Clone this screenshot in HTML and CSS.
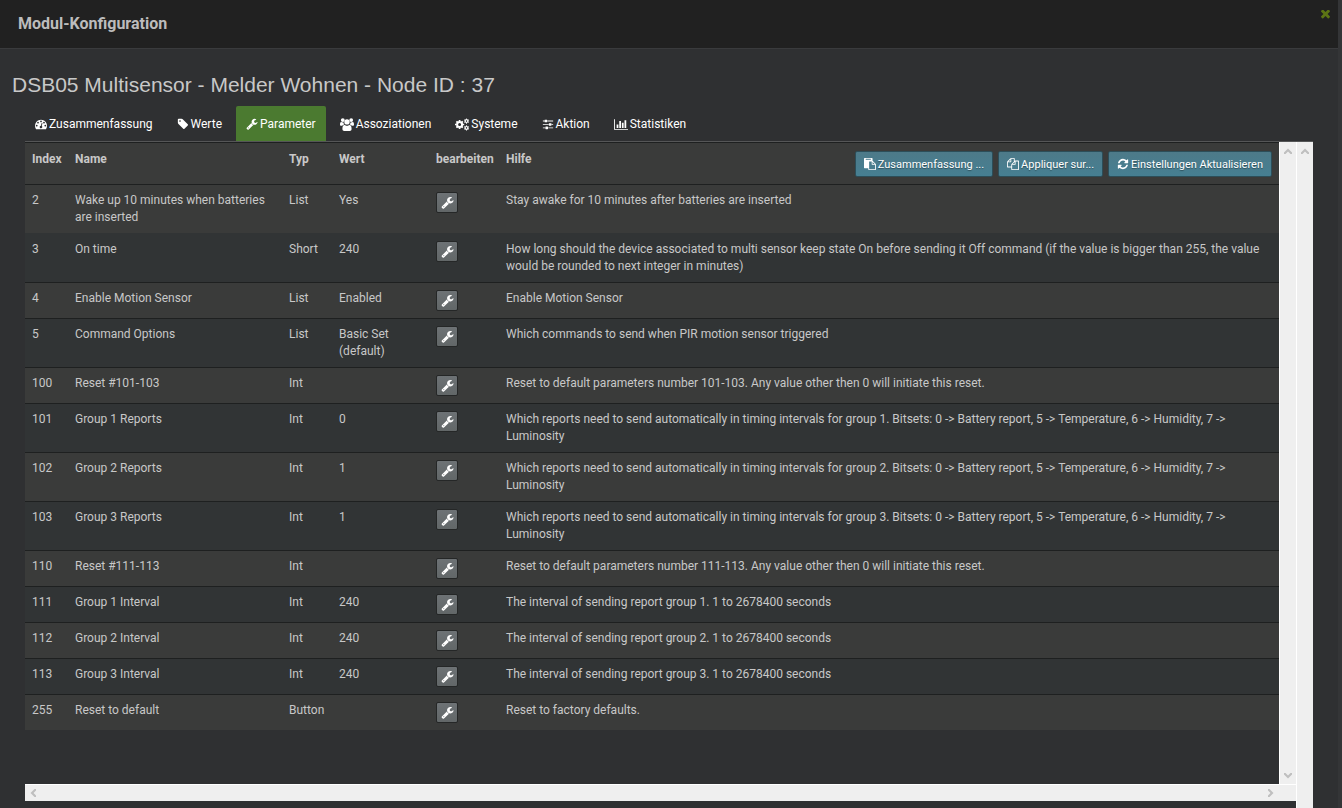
FILE: index.html
```html
<!DOCTYPE html>
<html lang="de">
<head>
<meta charset="utf-8">
<title>Modul-Konfiguration</title>
<link rel="stylesheet" href="styles.css">
</head>
<body>
<svg class="sprite" aria-hidden="true">
  <symbol id="wrench" viewBox="0 0 1792 1792"><path d="M448 1472q0-26-19-45t-45-19-45 19-19 45 19 45 45 19 45-19 19-45zm644-420l-682 682q-37 37-90 37-52 0-91-37l-106-108q-38-36-38-90 0-53 38-91l681-681q39 98 114.500 173.500t173.500 114.500zm634-435q0 39-23 106-47 134-164.500 217.500t-258.500 83.500q-185 0-316.500-131.500t-131.500-316.500 131.500-316.500 316.500-131.500q58 0 121.500 16.500t107.500 46.500q16 11 16 28t-16 28l-293 169v224l193 107q5-3 79-48.500t135.500-81 70.500-35.500q15 0 23.500 10t8.500 25z"/></symbol>
  <symbol id="gauge" viewBox="0 0 1792 1792"><path d="M384 1152q0-53-37.500-90.500t-90.500-37.500-90.500 37.500-37.500 90.500 37.500 90.500 90.500 37.500 90.500-37.500 37.500-90.500zm192-448q0-53-37.500-90.500t-90.500-37.500-90.500 37.500-37.500 90.500 37.500 90.500 90.500 37.500 90.500-37.500 37.500-90.500zm428 481l101-382q6-26-7.500-48.500t-38.500-29.500-48 6.500-30 39.500l-101 382q-60 5-107 43.500t-63 98.500q-20 77 20 146t117 89 146-20 89-117q16-60-6-117t-72-91zm660-33q0-53-37.500-90.500t-90.500-37.500-90.500 37.500-37.500 90.500 37.500 90.500 90.500 37.500 90.500-37.500 37.500-90.500zm-640-640q0-53-37.500-90.500t-90.500-37.500-90.500 37.500-37.500 90.500 37.500 90.500 90.500 37.500 90.500-37.500 37.500-90.500zm448 192q0-53-37.500-90.500t-90.500-37.500-90.500 37.500-37.500 90.500 37.500 90.500 90.500 37.500 90.500-37.500 37.500-90.500zm320 448q0 261-141 483-19 29-54 29h-1402q-35 0-54-29-141-221-141-483 0-182 71-348t191-286 286-191 348-71 348 71 286 191 191 286 71 348z"/></symbol>
  <symbol id="tag" viewBox="0 0 1792 1792"><path d="M576 448q0-53-37.500-90.500t-90.500-37.500-90.500 37.500-37.500 90.500 37.500 90.500 90.500 37.500 90.500-37.500 37.500-90.500zm1067 576q0 53-37 90l-491 492q-39 37-91 37-53 0-90-37l-715-716q-38-37-64.500-101t-26.500-117v-416q0-52 38-90t90-38h416q53 0 117 26.500t102 64.500l715 714q37 39 37 91z"/></symbol>
  <symbol id="users" viewBox="0 0 14 13"><circle cx="2.800" cy="2.100" r="1.900"/><circle cx="11.200" cy="2.100" r="1.900"/><circle cx="7" cy="3.900" r="2.700"/><path d="M0 6.800c0-1.800.3-2.900 1.200-2.900.6 0 1.400.8 2.300.5.100 1 .3 1.700.8 2.300-1.100 0-1.700.5-2.200 1.100H1.300C.5 7.800 0 7.400 0 6.800zM14 6.800c0-1.800-.3-2.900-1.200-2.900-.6 0-1.400.8-2.300.5-.1 1-.3 1.700-.8 2.300 1.100 0 1.700.5 2.200 1.100h.8c.8 0 1.300-.4 1.300-1zM2.400 11c0-2.600.7-4 2.200-4 .6 0 1.100.8 2.400.8S8.800 7 9.400 7c1.500 0 2.200 1.400 2.200 4 0 1.300-.7 2-1.900 2H4.300c-1.200 0-1.900-.7-1.900-2z"/></symbol>
  <symbol id="cogs" viewBox="0 0 14 13"><g fill="none" stroke="currentColor"><circle cx="4.600" cy="6.500" r="2.500" stroke-width="2"/><path d="M4.600 1.900v1.600M4.600 9.500v1.600M0 6.500h1.600M7.600 6.500h1.600M1.400 3.300l1.100 1.100M6.700 8.600l1.100 1.100M1.400 9.700l1.100-1.100M6.700 4.400l1.100-1.100" stroke-width="1.700"/><circle cx="11.500" cy="3.100" r="1.400" stroke-width="1.200"/><circle cx="11.500" cy="9.900" r="1.400" stroke-width="1.200"/><path d="M11.500.6v1M11.500 4.700v1M9.200 1.900l1 .5M12.900 3.800l1 .5M9.200 4.300l1-.5M12.900 2.400l1-.5M11.500 7.400v1M11.500 11.500v1M9.200 8.700l1 .5M12.900 10.600l1 .5M9.200 11.100l1-.5M12.900 9.200l1-.5"/></g></symbol>
  <symbol id="sliders" viewBox="0 0 1792 1792"><path d="M480 1408v128h-352v-128h352zm352-128q26 0 45 19t19 45v256q0 26-19 45t-45 19h-256q-26 0-45-19t-19-45v-256q0-26 19-45t45-19h256zm160-384v128h-864v-128h864zm-640-512v128h-224v-128h224zm1312 1024v128h-736v-128h736zm-960-1152q26 0 45 19t19 45v256q0 26-19 45t-45 19h-256q-26 0-45-19t-19-45v-256q0-26 19-45t45-19h256zm640 512q26 0 45 19t19 45v256q0 26-19 45t-45 19h-256q-26 0-45-19t-19-45v-256q0-26 19-45t45-19h256zm320 128v128h-224v-128h224zm0-512v128h-864v-128h864z"/></symbol>
  <symbol id="chart" viewBox="0 0 2048 1792"><path d="M640 896v512h-256v-512h256zm384-512v1024h-256v-1024h256zm1024 1152v128h-2048v-1536h128v1408h1920zm-640-896v768h-256v-768h256zm384-384v1152h-256v-1152h256z"/></symbol>
  <symbol id="paste" viewBox="0 0 1792 1792"><path d="M768 1664h896v-640h-416q-40 0-68-28t-28-68v-416h-384v1152zm256-1440v-64q0-13-9.500-22.500t-22.500-9.500h-704q-13 0-22.500 9.500t-9.500 22.500v64q0 13 9.500 22.500t22.500 9.500h704q13 0 22.500-9.500t9.500-22.500zm256 672h299l-299-299v299zm512 128v672q0 40-28 68t-68 28h-960q-40 0-68-28t-28-68v-160h-544q-40 0-68-28t-28-68v-1344q0-40 28-68t68-28h1088q40 0 68 28t28 68v328q21 13 36 28l408 408q28 28 48 76t20 88z"/></symbol>
  <symbol id="copy" viewBox="0 0 1792 1792"><path d="M1696 384q40 0 68 28t28 68v1216q0 40-28 68t-68 28h-960q-40 0-68-28t-28-68v-288h-544q-40 0-68-28t-28-68v-672q0-40 20-88t48-76l408-408q28-28 76-48t88-20h416q40 0 68 28t28 68v328q68-40 128-40h416zm-544 213l-299 299h299v-299zm-640-384l-299 299h299v-299zm196 647l316-316v-416h-384v416q0 40-28 68t-68 28h-416v640h512v-256q0-40 20-88t48-76zm956 804v-1152h-384v416q0 40-28 68t-68 28h-416v640h896z"/></symbol>
  <symbol id="refresh" viewBox="0 0 1792 1792"><path d="M1639 1056q0 5-1 7-64 268-268 434.500t-478 166.500q-146 0-282.500-55t-243.500-157l-129 129q-19 19-45 19t-45-19-19-45v-448q0-26 19-45t45-19h448q26 0 45 19t19 45-19 45l-137 137q71 66 161 102t187 36q134 0 250-65t186-179q11-17 53-117 8-23 30-23h192q13 0 22.500 9.500t9.500 22.500zm25-800v448q0 26-19 45t-45 19h-448q-26 0-45-19t-19-45 19-45l138-138q-148-137-349-137-134 0-250 65t-186 179q-11 17-53 117-8 23-30 23h-199q-13 0-22.500-9.500t-9.500-22.500v-7q65-268 270-434.500t480-166.500q146 0 284 55.500t245 156.500l130-129q19-19 45-19t45 19 19 45z"/></symbol>
  <symbol id="times" viewBox="302 430 1188 1188"><path d="M1490 1322q0 40-28 68l-136 136q-28 28-68 28t-68-28l-294-294-294 294q-28 28-68 28t-68-28l-136-136q-28-28-28-68t28-68l294-294-294-294q-28-28-28-68t28-68l136-136q28-28 68-28t68 28l294 294 294-294q28-28 68-28t68 28l136 136q28 28 28 68t-28 68l-294 294 294 294q28 28 28 68z"/></symbol>
  <symbol id="chevron" viewBox="0 0 8 6"><path d="M0 4.500L4 .5l4 4V6H6.500L4 3.500 1.500 6H0z"/></symbol>
</svg>

<div class="dialog">
  <header class="titlebar">
    <h1 class="titlebar-text">Modul-Konfiguration</h1>
    <button class="close" type="button" aria-label="Schließen"><svg><use href="#times"/></svg></button>
  </header>

  <main class="content">
    <h2 class="device">DSB05 Multisensor - Melder Wohnen - Node ID : 37</h2>

    <nav class="tabs">
      <a class="tab" href="#"><svg class="icon"><use href="#gauge"/></svg>Zusammenfassung</a>
      <a class="tab" href="#"><svg class="icon"><use href="#tag"/></svg>Werte</a>
      <a class="tab active" href="#" aria-current="page"><svg class="icon"><use href="#wrench"/></svg>Parameter</a>
      <a class="tab" href="#"><svg class="icon wide"><use href="#users"/></svg>Assoziationen</a>
      <a class="tab" href="#"><svg class="icon wide"><use href="#cogs"/></svg>Systeme</a>
      <a class="tab" href="#"><svg class="icon"><use href="#sliders"/></svg>Aktion</a>
      <a class="tab" href="#"><svg class="icon wide"><use href="#chart"/></svg>Statistiken</a>
    </nav>

    <div class="frame">
      <div class="inner">
        <div class="pane">
          <table class="params">
            <colgroup><col class="c-index"><col class="c-name"><col class="c-type"><col class="c-value"><col class="c-edit"><col></colgroup>
            <thead>
              <tr>
                <th>Index</th><th>Name</th><th>Typ</th><th>Wert</th><th>bearbeiten</th>
                <th><div class="help-head"><span>Hilfe</span>
                  <div class="actions">
                    <button class="action" type="button"><svg class="icon"><use href="#paste"/></svg>Zusammenfassung ...</button>
                    <button class="action" type="button"><svg class="icon"><use href="#copy"/></svg>Appliquer sur...</button>
                    <button class="action" type="button"><svg class="icon"><use href="#refresh"/></svg>Einstellungen Aktualisieren</button>
                  </div></div></th>
              </tr>
            </thead>
            <tbody>
              <tr><td>2</td><td>Wake up 10 minutes when batteries are inserted</td><td>List</td><td>Yes</td><td><button class="edit" type="button" aria-label="bearbeiten"><svg><use href="#wrench"/></svg></button></td><td>Stay awake for 10 minutes after batteries are inserted</td></tr>
              <tr class="joined"><td>3</td><td>On time</td><td>Short</td><td>240</td><td><button class="edit" type="button" aria-label="bearbeiten"><svg><use href="#wrench"/></svg></button></td><td>How long should the device associated to multi sensor keep state On before sending it Off command (if the value is bigger than 255, the value would be rounded to next integer in minutes)</td></tr>
              <tr><td>4</td><td>Enable Motion Sensor</td><td>List</td><td>Enabled</td><td><button class="edit" type="button" aria-label="bearbeiten"><svg><use href="#wrench"/></svg></button></td><td>Enable Motion Sensor</td></tr>
              <tr><td>5</td><td>Command Options</td><td>List</td><td>Basic Set (default)</td><td><button class="edit" type="button" aria-label="bearbeiten"><svg><use href="#wrench"/></svg></button></td><td>Which commands to send when PIR motion sensor triggered</td></tr>
              <tr><td>100</td><td>Reset #101-103</td><td>Int</td><td></td><td><button class="edit" type="button" aria-label="bearbeiten"><svg><use href="#wrench"/></svg></button></td><td>Reset to default parameters number 101-103. Any value other then 0 will initiate this reset.</td></tr>
              <tr><td>101</td><td>Group 1 Reports</td><td>Int</td><td>0</td><td><button class="edit" type="button" aria-label="bearbeiten"><svg><use href="#wrench"/></svg></button></td><td>Which reports need to send automatically in timing intervals for group 1. Bitsets: 0 -&gt; Battery report, 5 -&gt; Temperature, 6 -&gt; Humidity, 7 -&gt; Luminosity</td></tr>
              <tr><td>102</td><td>Group 2 Reports</td><td>Int</td><td>1</td><td><button class="edit" type="button" aria-label="bearbeiten"><svg><use href="#wrench"/></svg></button></td><td>Which reports need to send automatically in timing intervals for group 2. Bitsets: 0 -&gt; Battery report, 5 -&gt; Temperature, 6 -&gt; Humidity, 7 -&gt; Luminosity</td></tr>
              <tr><td>103</td><td>Group 3 Reports</td><td>Int</td><td>1</td><td><button class="edit" type="button" aria-label="bearbeiten"><svg><use href="#wrench"/></svg></button></td><td>Which reports need to send automatically in timing intervals for group 3. Bitsets: 0 -&gt; Battery report, 5 -&gt; Temperature, 6 -&gt; Humidity, 7 -&gt; Luminosity</td></tr>
              <tr><td>110</td><td>Reset #111-113</td><td>Int</td><td></td><td><button class="edit" type="button" aria-label="bearbeiten"><svg><use href="#wrench"/></svg></button></td><td>Reset to default parameters number 111-113. Any value other then 0 will initiate this reset.</td></tr>
              <tr><td>111</td><td>Group 1 Interval</td><td>Int</td><td>240</td><td><button class="edit" type="button" aria-label="bearbeiten"><svg><use href="#wrench"/></svg></button></td><td>The interval of sending report group 1. 1 to 2678400 seconds</td></tr>
              <tr><td>112</td><td>Group 2 Interval</td><td>Int</td><td>240</td><td><button class="edit" type="button" aria-label="bearbeiten"><svg><use href="#wrench"/></svg></button></td><td>The interval of sending report group 2. 1 to 2678400 seconds</td></tr>
              <tr><td>113</td><td>Group 3 Interval</td><td>Int</td><td>240</td><td><button class="edit" type="button" aria-label="bearbeiten"><svg><use href="#wrench"/></svg></button></td><td>The interval of sending report group 3. 1 to 2678400 seconds</td></tr>
              <tr><td>255</td><td>Reset to default</td><td>Button</td><td></td><td><button class="edit" type="button" aria-label="bearbeiten"><svg><use href="#wrench"/></svg></button></td><td>Reset to factory defaults.</td></tr>
            </tbody>
          </table>
        </div>
        <div class="vbar"><svg class="arrow"><use href="#chevron"/></svg><svg class="arrow down"><use href="#chevron"/></svg></div>
        <div class="hbar"><svg class="arrow left"><use href="#chevron"/></svg><svg class="arrow right"><use href="#chevron"/></svg></div>
      </div>
      <div class="vbar"><svg class="arrow"><use href="#chevron"/></svg></div>
    </div>
  </main>
</div>
</body>
</html>
```
FILE: styles.css
```css
* { box-sizing: border-box; }

body {
  margin: 0;
  background: #2f3032;
  color: #c8c8c8;
  font: 12px/17px Roboto, "Liberation Sans", sans-serif;
}

svg { fill: currentColor; }
.sprite { display: none; }
button { font: inherit; color: inherit; cursor: pointer; }

.dialog {
  display: flex;
  flex-direction: column;
  height: 100vh;
  min-height: 760px;
  border-right: 4px solid #343537;
  overflow: hidden;
}

.titlebar {
  display: flex;
  justify-content: space-between;
  align-items: flex-start;
  height: 49px;
  flex: none;
  padding: 10px 8px 0 18px;
  background: #212121;
  border-bottom: 1px solid #3a3b3d;
}
.titlebar-text { margin: 0; font-size: 16px; line-height: 28px; font-weight: 700; color: #bcbcbc; }
.close { display: flex; padding: 0; border: 0; background: none; color: #5c7414; }
.close svg { width: 9px; height: 9px; }

.content {
  display: flex;
  flex-direction: column;
  flex: 1;
  min-height: 0;
  padding: 23px 25px 0;
}
.device {
  margin: 0 0 8px -13px;
  font: 400 21px/26px "Liberation Sans", Arial, sans-serif;
  color: #c8c8c8;
}

.tabs { display: flex; gap: 4px; border-bottom: 1px solid #555657; }
.tab {
  display: flex;
  align-items: center;
  gap: 2px;
  height: 35px;
  padding: 1px 10px 0;
  border-radius: 2px 2px 0 0;
  color: #fff;
  text-decoration: none;
}
.tab.active { background: #4b7a30; }
.icon { width: 12px; height: 12px; flex: none; }
.icon.wide { width: 14px; height: 13px; }

.frame { display: flex; flex: 1; min-height: 0; }
.inner {
  display: grid;
  grid-template-columns: 1fr 17px;
  grid-template-rows: 1fr 17px;
  flex: 1;
  min-width: 0;
  margin-bottom: 7px;
}
.pane { overflow: hidden; }

.vbar, .hbar { display: flex; justify-content: space-between; background: #efefef; color: #bfbfbf; }
.vbar { flex-direction: column; align-items: center; width: 17px; padding: 6px 0 5px; border-left: 1px solid #fff; }
.hbar { grid-column: 1 / 3; align-items: center; padding: 0 21px 0 4px; border-top: 1px solid #fff; }
.arrow { width: 8px; height: 6px; }
.arrow.down { transform: rotate(180deg); }
.arrow.left { transform: rotate(-90deg); }
.arrow.right { transform: rotate(90deg); }

.params { width: 100%; border-collapse: separate; border-spacing: 0; table-layout: fixed; }
.c-index { width: 43px; }
.c-name { width: 214px; }
.c-type { width: 50px; }
.c-value { width: 97px; }
.c-edit { width: 70px; }
.params th, .params td {
  padding: 7px;
  border-top: 1px solid #1e2020;
  text-align: left;
  vertical-align: top;
  background: #3a3b3a;
}
.params td:nth-child(4) { padding-right: 34px; }
.params th { font-weight: 700; padding-top: 8px; }
.params tbody tr:nth-child(even) td { background: #313435; }
.params tbody tr.joined td { border-top-color: #313435; }

.help-head { display: flex; justify-content: space-between; }
.actions { display: flex; gap: 5px; }
.action {
  display: flex;
  align-items: center;
  gap: 2px;
  height: 26px;
  padding: 0 8px;
  border: 1px solid #2c4e59;
  border-radius: 2px;
  background: linear-gradient(#4d7a89, #467f92);
  color: #fff;
  font-size: 11px;
  font-weight: 400;
  text-shadow: 0 1px 1px #2c4e59;
}
.edit {
  display: flex;
  align-items: center;
  justify-content: center;
  width: 22px;
  height: 21px;
  padding: 0;
  border: 1px solid #252727;
  border-radius: 2px;
  background: linear-gradient(#6d7275, #626768);
  color: #fff;
}
.edit svg { width: 13px; height: 13px; }
```
